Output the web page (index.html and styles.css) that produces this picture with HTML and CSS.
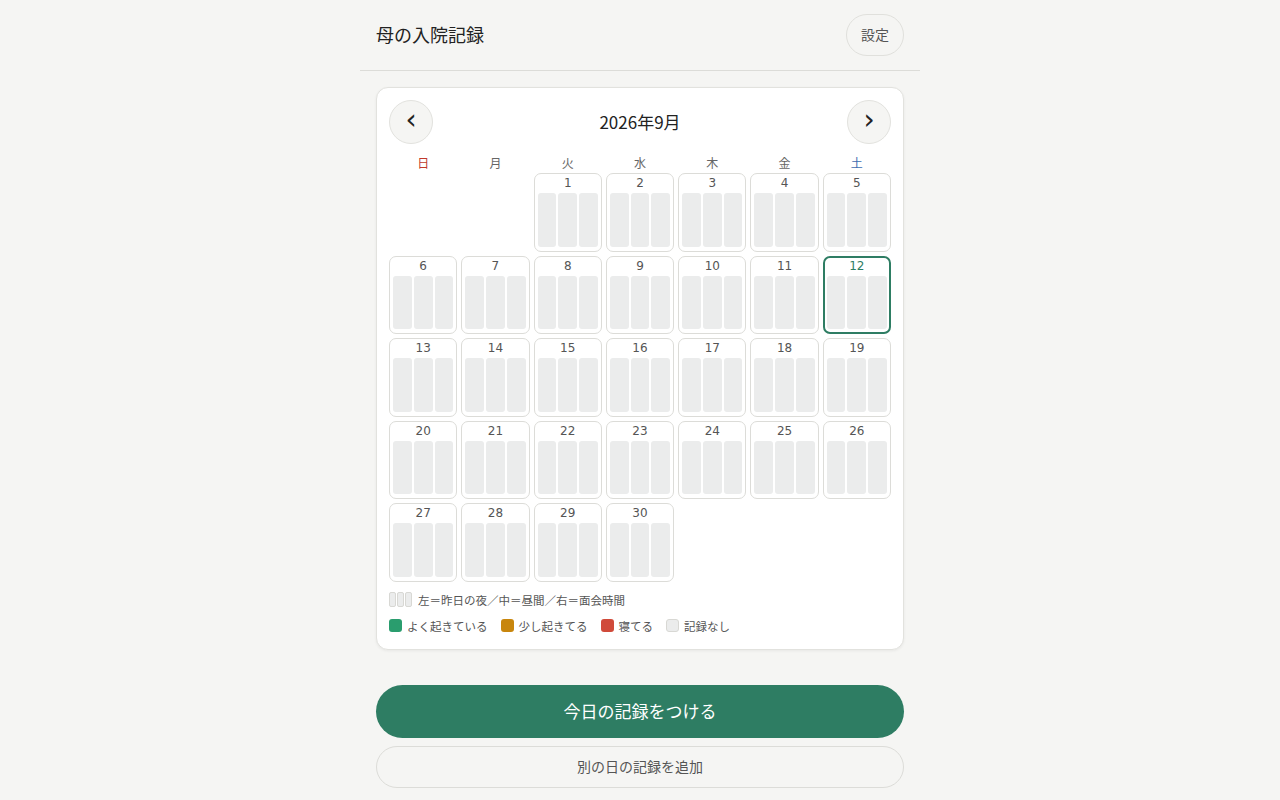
FILE: index.html
```html
<!DOCTYPE html>
<html lang="ja">
<head>
<meta charset="utf-8">
<title>母の入院記録</title>
<link rel="stylesheet" href="styles.css">
</head>
<body>
<div class="app">
  <header class="header">
    <h1 class="title">母の入院記録</h1>
    <button class="settings">設定</button>
  </header>
  <main class="main">
    <section class="card">
      <div class="nav">
        <button class="navbtn">‹</button>
        <div class="month">2026年9月</div>
        <button class="navbtn">›</button>
      </div>
      <div class="weekdays">
        <div class="wd sun">日</div><div class="wd">月</div><div class="wd">火</div><div class="wd">水</div><div class="wd">木</div><div class="wd">金</div><div class="wd sat">土</div>
      </div>
      <div class="grid" id="grid"></div>
      <div class="legend">
        <div class="lrow">
          <span class="mini"><i></i><i></i><i></i></span>
          <span>左＝昨日の夜／中＝昼間／右＝面会時間</span>
        </div>
        <div class="lrow">
          <span class="li"><span class="sw green"></span>よく起きている</span>
          <span class="li"><span class="sw orange"></span>少し起きてる</span>
          <span class="li"><span class="sw red"></span>寝てる</span>
          <span class="li"><span class="sw none"></span>記録なし</span>
        </div>
      </div>
    </section>
    <button class="primary">今日の記録をつける</button>
    <button class="secondary">別の日の記録を追加</button>
  </main>
</div>
<script>
var g=document.getElementById('grid');
var h='<div class="empty"></div><div class="empty"></div>';
for(var d=1;d<=30;d++){
  h+='<div class="day'+(d===12?' today':'')+'"><div class="num">'+d+'</div><div class="bars"><i></i><i></i><i></i></div></div>';
}
g.innerHTML=h;
</script>
</body>
</html>
```
FILE: styles.css
```css
* { box-sizing: border-box; }
html, body { margin: 0; padding: 0; }
body {
  background: #f5f5f3;
  font-family: "DejaVu Sans", "Noto Sans CJK JP", sans-serif;
  color: #333;
}
.app { width: 560px; margin: 0 auto; }
.header {
  height: 71px;
  padding: 0 16px;
  display: flex;
  align-items: center;
  justify-content: space-between;
  border-bottom: 1px solid #dcdcd8;
}
.title { margin: 0 0 2px; font-size: 18px; font-weight: 400; color: #222; font-family: "Noto Sans CJK JP", sans-serif; }
.settings {
  width: 58px; height: 42px;
  border-radius: 21px;
  border: 1px solid #e0e0dc;
  background: #f5f5f3;
  font-family: "Noto Sans CJK JP", sans-serif;
  font-size: 14px; color: #555;
  padding: 0 0 2px;
}
.main { padding: 16px 16px 0; }
.card {
  background: #fff;
  border: 1px solid #e2e2de;
  border-radius: 12px;
  box-shadow: 0 1px 3px rgba(0,0,0,0.06);
  padding: 12px 12px 15px;
}
.nav { display: flex; align-items: center; justify-content: space-between; }
.navbtn {
  width: 44px; height: 44px; border-radius: 50%;
  border: 1px solid #e2e2de; background: #f5f5f3;
  font-size: 28px; line-height: 1; color: #222; padding: 0 0 4px;
  font-family: "DejaVu Sans", sans-serif;
}
.month { font-size: 17px; color: #222; font-family: "Noto Sans CJK JP", sans-serif; margin-bottom: 2px; }
.weekdays {
  display: grid; grid-template-columns: repeat(7, 1fr); column-gap: 4px;
  margin-top: 8px; height: 20px; align-items: center;
}
.wd { text-align: center; font-size: 12px; color: #666; font-family: "Noto Sans CJK JP", sans-serif; }
.wd.sun { color: #c0392b; }
.wd.sat { color: #3f6db0; }
.grid {
  display: grid; grid-template-columns: repeat(7, 1fr);
  column-gap: 4px; row-gap: 4px; margin-top: 1px;
}
.day {
  height: 78.5px;
  border: 1px solid #dcdcd8;
  border-radius: 7px;
  padding: 2px 3px 4px;
  display: flex; flex-direction: column;
}
.day.today { border: 2px solid #2e7d63; padding: 1px 2px 3px; }
.num { text-align: center; font-size: 12px; color: #555; height: 15px; line-height: 15px; }
.today .num { color: #2e7d63; }
.bars { flex: 1; display: flex; gap: 2px; margin-top: 2px; }
.bars i { flex: 1; background: #ebecec; border-radius: 3px; }
.legend { margin-top: 10px; font-size: 11.5px; color: #555; font-family: "Noto Sans CJK JP", sans-serif; }
.lrow { display: flex; align-items: center; height: 16px; }
.lrow + .lrow { margin-top: 10px; }
.mini { display: inline-flex; gap: 1px; margin-right: 6px; }
.mini i { width: 7px; height: 15px; background: #ebecec; border: 1px solid #d8d8d4; border-radius: 2px; }
.li { display: inline-flex; align-items: center; margin-right: 13px; }
.sw { width: 13px; height: 13px; border-radius: 3px; margin-right: 5px; }
.sw.green { background: #2a9d6e; }
.sw.orange { background: #c8860d; }
.sw.red { background: #d04a3a; }
.sw.none { background: #ebecec; border: 1px solid #d8d8d4; }
.primary {
  display: block; width: 100%; height: 53px; margin-top: 35px;
  border: 0; border-radius: 27px; background: #2e7d63; color: #fff;
  font-size: 17px; font-family: "Noto Sans CJK JP", sans-serif; padding: 0 0 2px;
}
.secondary {
  display: block; width: 100%; height: 42px; margin-top: 8px;
  border: 1px solid #dcdcd8; border-radius: 21px; background: transparent; color: #555;
  font-size: 14px; font-family: "Noto Sans CJK JP", sans-serif; padding: 0 0 2px;
}
```
